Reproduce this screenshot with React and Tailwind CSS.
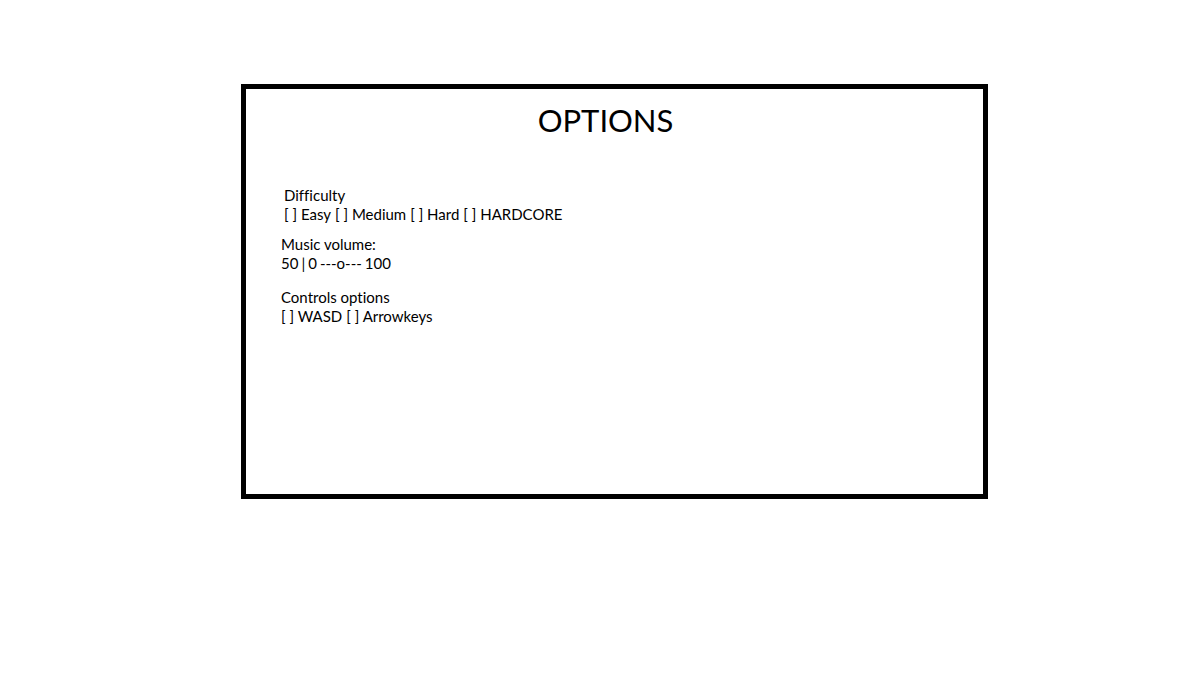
import { useState } from "react";

function Choice({ type, name, label, checked, onChange }) {
  return (
    <label className="relative cursor-pointer whitespace-pre focus-within:underline">
      <input
        type={type}
        name={name}
        checked={checked}
        onChange={onChange}
        className="absolute inset-0 m-0 cursor-pointer appearance-none opacity-0"
      />
      {checked ? "[x] " : "[ ] "}
      {label}
    </label>
  );
}

function VolumeSlider({ value, onChange }) {
  const before = Math.round((value / 100) * 6);
  return (
    <span className="relative">
      <span aria-hidden="true">{"-".repeat(before) + "o" + "-".repeat(6 - before)}</span>
      <input
        id="volume"
        type="range"
        min="0"
        max="100"
        value={value}
        onChange={(e) => onChange(Number(e.target.value))}
        className="absolute inset-0 m-0 h-full w-full cursor-pointer opacity-0"
      />
    </span>
  );
}

export default function App() {
  const [difficulty, setDifficulty] = useState(null);
  const [controls, setControls] = useState(null);
  const [volume, setVolume] = useState(50);

  return (
    <main className="min-h-screen bg-white pt-[84px] pr-[195px] pb-10 pl-[241px] font-['Lato',sans-serif] text-[15px] leading-[19px] text-black [font-variant-ligatures:none]">
      <section className="min-h-[415px] border-5 border-black pt-3">
        <h1 className="pr-[18px] text-center text-[31px] leading-[38px]">OPTIONS</h1>

        <fieldset className="mt-[47px] pl-[38px]">
          <legend>Difficulty</legend>
          <div className="flex flex-wrap gap-x-1">
            {["Easy", "Medium", "Hard", "HARDCORE"].map((level) => (
              <Choice
                key={level}
                type="radio"
                name="difficulty"
                label={level}
                checked={difficulty === level}
                onChange={() => setDifficulty(level)}
              />
            ))}
          </div>
        </fieldset>

        <div className="mt-[11px] pl-[35px]">
          <label htmlFor="volume">Music volume:</label>
          <div className="flex gap-[3px]">
            <output htmlFor="volume">{volume}</output>
            <span>|</span>
            <span>0</span>
            <VolumeSlider value={volume} onChange={setVolume} />
            <span>100</span>
          </div>
        </div>

        <fieldset className="mt-[15px] pl-[35px]">
          <legend>Controls options</legend>
          <div className="flex flex-wrap gap-x-1">
            {["WASD", "Arrowkeys"].map((scheme) => (
              <Choice
                key={scheme}
                type="radio"
                name="controls"
                label={scheme}
                checked={controls === scheme}
                onChange={() => setControls(scheme)}
              />
            ))}
          </div>
        </fieldset>
      </section>
    </main>
  );
}
